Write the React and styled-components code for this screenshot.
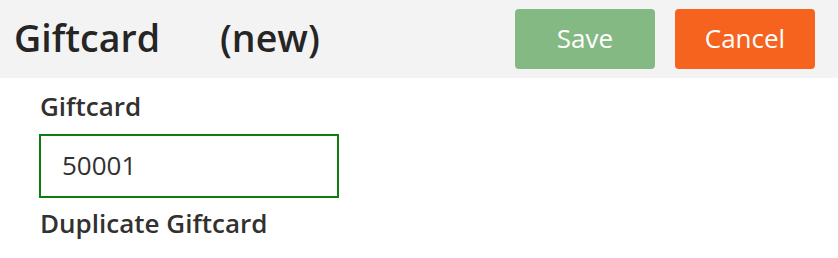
import React from "react";
import styled, { createGlobalStyle } from "styled-components";

const Global = createGlobalStyle`
  html, body { margin: 0; padding: 0; background: #fff; }
  body { font-family: "Open Sans", "Noto Sans", sans-serif; color: #323130; }
`;

const Page = styled.div`
  width: 838px;
  height: 258px;
  overflow: hidden;
`;

const Header = styled.div`
  height: 78px;
  background: #f3f3f3;
  display: flex;
  align-items: center;
  padding: 0 23px 0 14px;
  box-sizing: border-box;
`;

const Title = styled.h1`
  margin: 0;
  font-size: 37.5px;
  font-weight: 600;
  color: #252525;
  display: flex;
  gap: 60px;
  flex: 1;
  line-height: 1;
  padding-bottom: 2px;
`;

const Actions = styled.div`
  display: flex;
  gap: 20px;
`;

const Button = styled.button`
  width: 140px;
  height: 60px;
  border: none;
  border-radius: 4px;
  font-family: inherit;
  font-size: 26px;
  color: #fff;
  background: ${(p) => (p.$variant === "primary" ? "#84b984" : "#f5631e")};
  cursor: pointer;
  padding: 0 0 2px;
`;

const Form = styled.div`
  padding: 13px 0 0 39px;
  display: flex;
  flex-direction: column;
`;

const Label = styled.label`
  font-size: 26px;
  font-weight: 600;
  line-height: 30px;
  padding-left: 1px;
  color: #323130;
`;

const Input = styled.input`
  width: 300px;
  height: 64px;
  box-sizing: border-box;
  margin: 13px 0 10px;
  border: 2px solid #107c10;
  padding: 0 0 2px 21px;
  font-family: inherit;
  font-size: 26px;
  color: #323130;
  outline: none;
`;

export default function App() {
  return (
    <Page>
      <Global />
      <Header>
        <Title>
          <span>Giftcard</span>
          <span>(new)</span>
        </Title>
        <Actions>
          <Button $variant="primary">Save</Button>
          <Button $variant="danger">Cancel</Button>
        </Actions>
      </Header>
      <Form>
        <Label>Giftcard</Label>
        <Input defaultValue="50001" />
        <Label>Duplicate Giftcard</Label>
      </Form>
    </Page>
  );
}
